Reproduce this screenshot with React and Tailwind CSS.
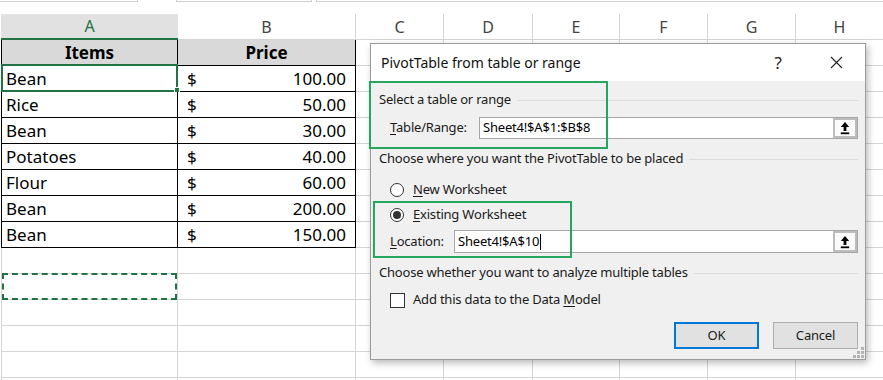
import React from 'react';

const ROWS = [
  ['Bean', '100.00'],
  ['Rice', '50.00'],
  ['Bean', '30.00'],
  ['Potatoes', '40.00'],
  ['Flour', '60.00'],
  ['Bean', '200.00'],
  ['Bean', '150.00'],
];

// widths of columns C..H
const REST = ['w-[88px]', 'w-[89px]', 'w-[87px]', 'w-[88px]', 'w-[88px]', 'w-[88px]'];
const LETTERS = ['C', 'D', 'E', 'F', 'G', 'H'];

const GREEN = 'border-[#217346]';

const RestCells = () =>
  REST.map((w, i) => <div key={i} className={`${w} h-full shrink-0 border-r border-b border-[#d4d4d4]`} />);

const UploadBtn = () => (
  <div className="w-[24px] h-full shrink-0 border-2 border-[#bdbdbd] bg-[#fafafa] flex items-center justify-center">
    <svg width="10" height="14" viewBox="0 0 10 14">
      <polygon points="5,1 9.2,6 6.4,6 6.4,10 3.6,10 3.6,6 0.8,6" fill="#000" />
      <rect x="0.8" y="11.4" width="8.4" height="1.8" fill="#000" />
    </svg>
  </div>
);

const SectionHead = ({ children }) => (
  <div className="flex items-center h-[20px] pl-[8px] pr-[7px]">
    <span className="whitespace-nowrap">{children}</span>
    <div className="flex-1 h-px bg-[#dcdcdc] ml-[6px]" />
  </div>
);

const Radio = ({ checked, children }) => (
  <div className="flex items-center h-[20px] pl-[19px] gap-[9px]">
    <div className="w-[14px] h-[14px] rounded-full border border-[#333] bg-white flex items-center justify-center">
      {checked && <div className="w-[8px] h-[8px] rounded-full bg-[#333]" />}
    </div>
    <span>{children}</span>
  </div>
);

const Dialog = () => (
  <div
    className="absolute left-[370px] top-[43px] w-[496px] h-[317px] border border-[#9b9b9b] bg-[#f0f0f0] shadow-[2px_3px_7px_rgba(0,0,0,0.28)] text-[13px] tracking-[-0.2px] text-[#1a1a1a]"
    style={{ fontFamily: '"Noto Sans", sans-serif' }}
  >
    {/* title bar */}
    <div className="h-[37px] bg-white flex items-center">
      <span className="flex-1 pl-[10px] text-[14px] tracking-normal text-[#111]">PivotTable from table or range</span>
      <div className="w-[58px] flex justify-center text-[17px] text-[#222]">?</div>
      <div className="w-[58px] flex justify-center">
        <svg width="13" height="13" viewBox="0 0 13 13">
          <path d="M1 1 L12 12 M12 1 L1 12" stroke="#222" strokeWidth="1.1" />
        </svg>
      </div>
    </div>

    <div className="mt-[9px]">
      <SectionHead>Select a table or range</SectionHead>
    </div>
    <div className="mt-[7px] h-[22px] flex items-center pl-[19px] pr-[7px]">
      <div className="w-[89px] shrink-0">
        <span className="underline underline-offset-2">T</span>able/Range:
      </div>
      <div className="flex-1 h-full border border-[#a6a6a6] bg-white flex items-center">
        <span className="flex-1 pl-[3px] text-black">Sheet4!$A$1:$B$8</span>
        <UploadBtn />
      </div>
    </div>

    <div className="mt-[10px]">
      <SectionHead>Choose where you want the PivotTable to be placed</SectionHead>
    </div>
    <div className="mt-[11px]">
      <Radio><span className="underline underline-offset-2">N</span>ew Worksheet</Radio>
    </div>
    <div className="mt-[5px]">
      <Radio checked><span className="underline underline-offset-2">E</span>xisting Worksheet</Radio>
    </div>
    <div className="mt-[5px] h-[23px] flex items-center pl-[19px] pr-[7px]">
      <div className="w-[64px] shrink-0">
        <span className="underline underline-offset-2">L</span>ocation:
      </div>
      <div className="flex-1 h-full border border-[#a6a6a6] bg-white flex items-center">
        <span className="pl-[3px] text-black">Sheet4!$A$10</span>
        <span className="w-px h-[16px] bg-black ml-px" />
        <div className="flex-1" />
        <UploadBtn />
      </div>
    </div>

    <div className="mt-[10px]">
      <SectionHead>Choose whether you want to analyze multiple tables</SectionHead>
    </div>
    <div className="mt-[7px] h-[20px] flex items-center pl-[19px] gap-[8px]">
      <div className="w-[15px] h-[15px] border border-[#333] bg-white" />
      <span>Add this data to the Data <span className="underline underline-offset-2">M</span>odel</span>
    </div>

    <div className="mt-[12px] flex justify-end gap-[14px] pr-[7px]">
      <div className="w-[85px] h-[27px] bg-[#e1e1e1] border-2 border-[#0078d7] flex items-center justify-center">OK</div>
      <div className="w-[85px] h-[27px] bg-[#e1e1e1] border border-[#adadad] flex items-center justify-center">Cancel</div>
    </div>

    {/* resize grip */}
    <svg className="absolute right-[1px] bottom-[1px]" width="11" height="11" viewBox="0 0 11 11">
      {[[8, 0], [4, 4], [8, 4], [0, 8], [4, 8], [8, 8]].map(([x, y]) => (
        <rect key={`${x}-${y}`} x={x} y={y} width="3" height="3" fill="#b4b4b4" />
      ))}
    </svg>

    {/* green highlight boxes */}
    <div className="absolute -left-[2px] top-[37px] w-[239px] h-[68px] border-2 border-[#25a55f]" />
    <div className="absolute left-[2px] top-[157px] w-[199px] h-[57px] border-2 border-[#25a55f]" />
  </div>
);

export default function App() {
  return (
    <div
      className="relative w-[883px] h-[380px] overflow-hidden bg-white text-black"
      style={{ fontFamily: '"Noto Sans", sans-serif' }}
    >
      {/* bits of the toolbar above */}
      <div className="h-[14px] flex items-start">
        <div className="w-[138px] h-[2px] border-b border-r border-[#cfcfcf]" />
        <div className="ml-[38px] w-[136px] h-[2px] border-b border-l border-r border-[#cfcfcf]" />
        <div className="ml-[4px] flex-1 h-[2px] border-b border-l border-[#cfcfcf]" />
      </div>

      <div className="ml-px">
        {/* column headers */}
        <div className="h-[26px] flex text-[16px]">
          <div className={`w-[177px] shrink-0 h-full bg-[#e1e1e1] border-b-2 ${GREEN} text-[#217346] flex items-center justify-center`}>A</div>
          <div className="w-[178px] shrink-0 h-full border-r border-b border-[#d4d4d4] text-[#444] flex items-center justify-center">B</div>
          {REST.map((w, i) => (
            <div key={i} className={`${w} shrink-0 h-full border-r border-b border-[#d4d4d4] text-[#444] flex items-center justify-center`}>
              {LETTERS[i]}
            </div>
          ))}
        </div>

        {/* table header */}
        <div className="h-[26px] flex text-[17px]">
          <div className="w-[177px] shrink-0 h-full bg-[#d9d9d9] border-l border-r border-b border-black font-bold flex items-center justify-center">Items</div>
          <div className="w-[178px] shrink-0 h-full bg-[#d9d9d9] border-r border-b border-black font-bold flex items-center justify-center">Price</div>
          <RestCells />
        </div>

        {ROWS.map(([item, price], i) => (
          <div key={i} className="h-[26px] flex text-[17px]">
            <div className="relative w-[177px] shrink-0 h-full border-l border-r border-b border-black flex items-center pl-[4px]">
              {item}
              {i === 0 && (
                <>
                  <div className={`absolute -left-px -top-[2px] w-[177px] h-[28px] border-2 ${GREEN}`} />
                  <div className="absolute left-[172px] top-[21px] w-[6px] h-[6px] bg-[#217346] border border-white" />
                </>
              )}
            </div>
            <div className="w-[178px] shrink-0 h-full border-r border-b border-black flex items-center justify-between pl-[9px] pr-[9px]">
              <span>$</span>
              <span>{price}</span>
            </div>
            <RestCells />
          </div>
        ))}

        {[0, 1, 2, 3, 4, 5].map(i => (
          <div key={i} className="h-[26px] flex">
            <div className="relative w-[177px] shrink-0 h-full border-l border-r border-b border-[#d4d4d4]">
              {i === 1 && (
                <div className={`absolute left-0 -top-px w-[175px] h-[27px] border-2 border-dashed ${GREEN}`} />
              )}
            </div>
            <div className="w-[178px] shrink-0 h-full border-r border-b border-[#d4d4d4]" />
            <RestCells />
          </div>
        ))}
      </div>

      <Dialog />
    </div>
  );
}
